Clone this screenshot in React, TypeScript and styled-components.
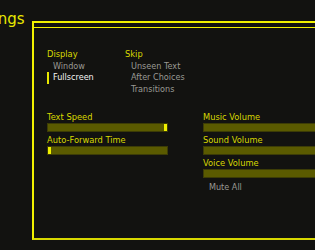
import React from "react";
import styled, { createGlobalStyle } from "styled-components";

const GlobalStyle = createGlobalStyle`
  html, body {
    margin: 0;
    padding: 0;
    background-color: #121210;
    overflow: hidden;
  }
  body {
    font-family: "DejaVu Sans", "Liberation Sans", sans-serif;
  }
`;

const Page = styled.div`
  display: flex;
  width: 315px;
  height: 250px;
  overflow: hidden;
  background-color: #121210;
`;

const TitleColumn = styled.div`
  width: 32px;
  flex-shrink: 0;
  overflow: visible;
`;

const Title = styled.h1`
  margin: 9px 0 0 -37px;
  font-size: 15px;
  font-weight: normal;
  line-height: 20px;
  color: #e8e800;
  white-space: nowrap;
`;

const Frame = styled.section`
  margin-top: 21px;
  width: 320px;
  height: 215px;
  flex-shrink: 0;
  border: 2px solid #f0f000;
  border-right: none;
  border-bottom-color: #d8d800;
  display: flex;
  flex-direction: column;
`;

const HeaderStrip = styled.div`
  height: 4px;
  border-bottom: 1px solid #f0f000;
`;

const Content = styled.div`
  padding: 21px 0 0 13px;
  display: flex;
  flex-direction: column;
  gap: 16px;
`;

const Choices = styled.div`
  display: flex;
`;

const ChoiceGroup = styled.div`
  width: 78px;
  display: flex;
  flex-direction: column;
`;

const GroupLabel = styled.div`
  font-size: 8.3px;
  line-height: 11.7px;
  color: #d8d800;
`;

const Option = styled.div<{ $selected?: boolean }>`
  font-size: 8.1px;
  line-height: 11.7px;
  padding-left: 6px;
  color: ${(p) => (p.$selected ? "#f4f4f4" : "#9a9a94")};
  box-shadow: ${(p) => (p.$selected ? "inset 2px 0 0 #e8e800" : "none")};
`;

const Sliders = styled.div`
  display: flex;
  gap: 35px;
`;

const SliderColumn = styled.div<{ $width: number }>`
  width: ${(p) => p.$width}px;
  flex-shrink: 0;
  display: flex;
  flex-direction: column;
`;

const SliderLabel = styled.div`
  font-size: 8.3px;
  line-height: 11px;
  color: #d8d800;
`;

const Bar = styled.div<{ $thumb: "start" | "end" | "none" }>`
  height: 9px;
  margin-bottom: 3px;
  background-color: #5a5a00;
  border: 1px solid #3c3c06;
  box-sizing: border-box;
  display: flex;
  justify-content: ${(p) => (p.$thumb === "end" ? "flex-end" : "flex-start")};
`;

const Thumb = styled.div`
  width: 3px;
  height: 100%;
  background-color: #f0f000;
`;

const MuteAll = styled.div`
  font-size: 8.1px;
  line-height: 11px;
  padding-left: 6px;
  margin-top: 1px;
  color: #9a9a94;
`;

const Slider: React.FC<{ label: string; thumb: "start" | "end" | "none" }> = ({ label, thumb }) => (
  <>
    <SliderLabel>{label}</SliderLabel>
    <Bar $thumb={thumb}>{thumb !== "none" && <Thumb />}</Bar>
  </>
);

const App: React.FC = () => {
  return (
    <Page>
      <GlobalStyle />
      <TitleColumn>
        <Title>Settings</Title>
      </TitleColumn>
      <Frame>
        <HeaderStrip />
        <Content>
          <Choices>
            <ChoiceGroup>
              <GroupLabel>Display</GroupLabel>
              <Option>Window</Option>
              <Option $selected>Fullscreen</Option>
            </ChoiceGroup>
            <ChoiceGroup>
              <GroupLabel>Skip</GroupLabel>
              <Option>Unseen Text</Option>
              <Option>After Choices</Option>
              <Option>Transitions</Option>
            </ChoiceGroup>
          </Choices>
          <Sliders>
            <SliderColumn $width={121}>
              <Slider label="Text Speed" thumb="end" />
              <Slider label="Auto-Forward Time" thumb="start" />
            </SliderColumn>
            <SliderColumn $width={130}>
              <Slider label="Music Volume" thumb="none" />
              <Slider label="Sound Volume" thumb="none" />
              <Slider label="Voice Volume" thumb="none" />
              <MuteAll>Mute All</MuteAll>
            </SliderColumn>
          </Sliders>
        </Content>
      </Frame>
    </Page>
  );
};

export default App;
